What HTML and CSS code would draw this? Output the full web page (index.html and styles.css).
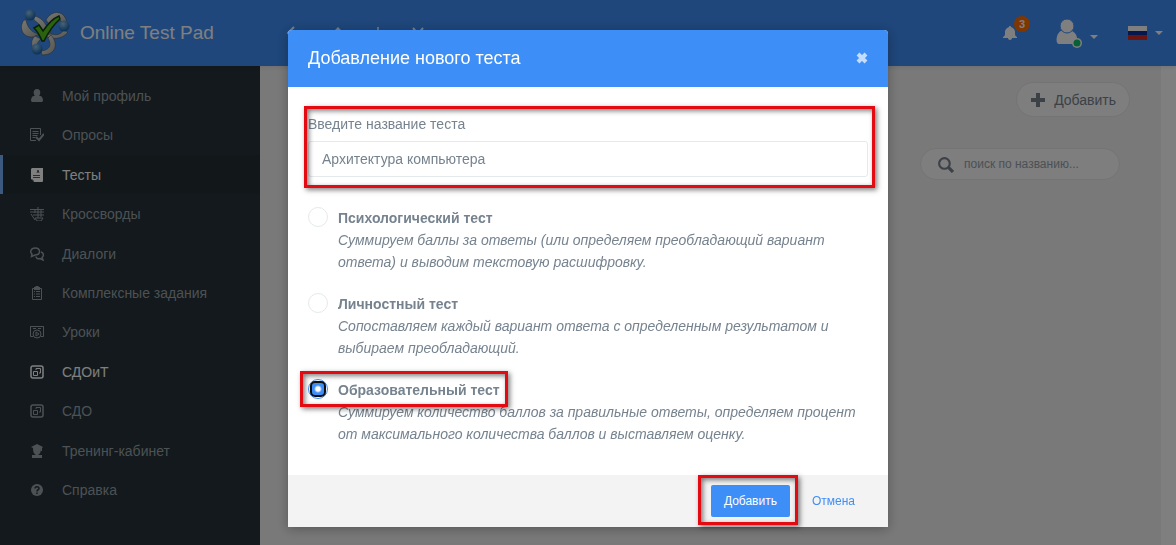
FILE: index.html
```html
<!DOCTYPE html>
<html lang="ru">
<head>
    <meta charset="UTF-8">
    <meta name="viewport" content="width=device-width, initial-scale=1.0">
    <title>Online Test Pad</title>
    <link rel="stylesheet" href="styles.css">
</head>
<body>
    <div class="page">
        <header class="navbar">
            <a class="brand" href="#">
                <svg class="logo" viewBox="0 0 50 48">
                    <defs>
                        <radialGradient id="ball" cx="40%" cy="30%" r="65%">
                            <stop offset="0" stop-color="#8cc8f0"/>
                            <stop offset="1" stop-color="#1f68b0"/>
                        </radialGradient>
                        <linearGradient id="ring" x1="0" y1="0" x2="1" y2="1">
                            <stop offset="0" stop-color="#f0f0ea"/>
                            <stop offset="1" stop-color="#a8a8a2"/>
                        </linearGradient>
                    </defs>
                    <g fill="url(#ring)" stroke="#4d5a68" stroke-width=".6">
                        <path d="M3 11C-3 19 2 29 12 28l6-3C11 24 6 18 5 11z"/>
                        <path d="M13 7c7 1 11 6 14 13l4 6-7-2c-4-6-6-10-11-13z"/>
                        <path d="M25 11C31 0 44 1 46 14l-4 1C38 7 32 8 28 15z"/>
                        <path d="M47 23c-6 8-16 8-25 3l8-1c6 2 10 0 13-4z"/>
                        <path d="M14 27c-4 4-4 8-2 13l4-2c0-3 1-6 4-8z"/>
                        <path d="M21 46c14 0 17-11 9-20l-3 3c4 7 2 12-7 13z"/>
                    </g>
                    <circle cx="9" cy="6" r="5.500" fill="url(#ball)"/>
                    <circle cx="43" cy="17" r="5.500" fill="url(#ball)"/>
                    <circle cx="16" cy="40" r="5.500" fill="url(#ball)"/>
                    <path d="M13 19l5-3 4 6C26 16 31 10 38 7l1 3c-8 7-12 14-16 22h-2c-2-5-4-9-8-13z" fill="#54c41a" stroke="#14400a" stroke-width="1.500"/>
                </svg>
                <span>Online Test Pad</span>
            </a>
            <nav class="crumbs">
                <svg viewBox="0 0 16 16"><path d="M10 1L4 7l6 6" fill="none" stroke="currentColor" stroke-width="2"/></svg>
                <svg viewBox="0 0 16 16"><path d="M8 1l7 7h-2v6H3V8H1z" fill="currentColor"/></svg>
                <svg viewBox="0 0 16 16"><path d="M8 1v14M3 8h10" fill="none" stroke="currentColor" stroke-width="1.500"/></svg>
                <svg viewBox="0 0 16 16"><path d="M3 2l10 12M13 2L3 14" fill="none" stroke="currentColor" stroke-width="2"/></svg>
            </nav>
            <div class="tools">
                <a class="bell" href="#" aria-label="Уведомления">
                    <svg viewBox="0 0 14 14"><path d="M7 0c1 0 1 .5 1 1 3 1 4 3 4 5 0 3 0 4 2 5v1H0v-1c2-1 2-2 2-5 0-2 1-4 4-5 0-.5 0-1 1-1zM5 12h4C9 14.500 5 14.500 5 12z" fill="#fff"/></svg>
                    <span class="badge">3</span>
                </a>
                <a class="user" href="#" aria-label="Профиль">
                    <svg class="avatar" viewBox="0 0 28 30">
                        <path d="M5 13h11c4 2 6 6 5 13H3c-4 0-3-11 2-13z" fill="#fff"/>
                        <circle cx="11" cy="8" r="7" fill="#fff" stroke="#3e8ef7"/>
                        <circle cx="21" cy="25" r="5" fill="#fff"/>
                        <circle cx="21" cy="25" r="3.500" fill="#11c26d"/>
                    </svg>
                    <span class="caret"></span>
                </a>
                <a class="lang" href="#" aria-label="Язык">
                    <span class="flag"></span>
                    <span class="caret"></span>
                </a>
            </div>
        </header>

        <div class="layout">
            <aside class="sidebar">
                <ul class="menu">
                    <li><a href="#">
                        <svg viewBox="0 0 14 14"><path d="M7 0c4 0 4 5 2 7h1c2 0 3 2 3 5l-1 1H2l-1-1c0-3 1-5 3-5h1C3 5 3 0 7 0z" fill="currentColor"/></svg>
                        Мой профиль</a></li>
                    <li><a href="#">
                        <svg viewBox="0 0 14 14" fill="none" stroke="currentColor"><path d="M10.500 7V.5H.5v12H6M2.500 3.500h6M2.500 5.500h6M2.500 7.500h5M2.500 9.500h3"/><path d="M6 9l3 3 5-6" stroke-width="2"/></svg>
                        Опросы</a></li>
                    <li class="active"><a href="#">
                        <svg viewBox="0 0 14 14"><path d="M2 0h11v13a1 1 0 01-1 1H4l-3-3V1z" fill="currentColor"/><path d="M7 5l1-3 1 3M3 7.500h7M3 9.500h7M1 12h2v2" fill="none" stroke="#263238" stroke-width=".8"/></svg>
                        Тесты</a></li>
                    <li><a href="#">
                        <svg viewBox="0 0 14 14" fill="none" stroke="currentColor"><path d="M0 2.500h14M0 5h14M3 8h11M8 0v11M5 2v4M11 2v8M1 7l4 6M5 11h8l-2 3H7z" /></svg>
                        Кроссворды</a></li>
                    <li><a href="#">
                        <svg viewBox="0 0 14 14" fill="none" stroke="currentColor" stroke-width="1.500"><path d="M5 1c6 0 6 7 0 7L1.500 9.500 2 7C-.5 5 1 1 5 1zM11 5c3 1 3 4 1 5.500l1 2.500-3-1.500c-2 .5-4 0-4-2"/></svg>
                        Диалоги</a></li>
                    <li><a href="#">
                        <svg viewBox="0 0 14 14" fill="none" stroke="currentColor"><path d="M4 2.500H2.500v11h9v-11H10M4 5.500h1M6 5.500h4M4 8h1M6 8h4M4 10.500h1M6 10.500h4"/><path d="M4 1h1l1-1h2l1 1h1v3H4z" fill="currentColor" stroke="none"/></svg>
                        Комплексные задания</a></li>
                    <li><a href="#">
                        <svg viewBox="0 0 14 14" fill="none" stroke="currentColor"><path d="M3 11.500H.5v-10h13v10H11M.5 1.500h13M3 3.500h3M8 3.500h3"/><circle cx="7" cy="9" r="4"/><path d="M6 7l3 2-3 2z"/></svg>
                        Уроки</a></li>
                    <li class="marked"><a href="#">
                        <svg viewBox="0 0 14 14" fill="none" stroke="currentColor"><rect x="1" y="1" width="12" height="12" rx="2" stroke-width="1.500"/><path d="M3.500 6.500h4v4h-4zM6 5V3.500h4.500V8H9"/></svg>
                        СДОиТ</a></li>
                    <li><a href="#">
                        <svg viewBox="0 0 14 14" fill="none" stroke="currentColor"><rect x="1" y="1" width="12" height="12" rx="2" stroke-width="1.500"/><path d="M3.500 6.500h4v4h-4zM6 5V3.500h4.500V8H9"/></svg>
                        СДО</a></li>
                    <li><a href="#">
                        <svg viewBox="0 0 14 14"><path d="M7 0l6 3-1 1v3h-1V4c0 4-1 6-3 7h4v3H2v-3h4C4 10 3 8 3 4L1 3z" fill="currentColor"/></svg>
                        Тренинг-кабинет</a></li>
                    <li><a href="#">
                        <svg viewBox="0 0 14 14"><circle cx="7" cy="7" r="6" fill="currentColor"/><path d="M5 5.500C5 3 9 3 9 5.500 9 7 7 6.500 7 8.500M7 9.500V11" fill="none" stroke="#263238" stroke-width="1.500"/></svg>
                        Справка</a></li>
                </ul>
            </aside>

            <main class="content">
                <button class="add" type="button">
                    <svg viewBox="0 0 16 16"><path d="M6 1h4v5h5v4h-5v5H6v-5H1V6h5z" fill="currentColor"/></svg>
                    Добавить
                </button>
                <label class="search">
                    <svg viewBox="0 0 16 16" fill="none" stroke="currentColor"><circle cx="7" cy="7" r="5" stroke-width="2"/><path d="M11 11l4 4" stroke-width="3"/></svg>
                    <input type="text" placeholder="поиск по названию..." aria-label="поиск по названию">
                </label>
            </main>
        </div>
    </div>

    <div class="backdrop">
        <form class="modal" role="dialog" aria-labelledby="modal-title">
            <div class="modal-header">
                <h4 id="modal-title">Добавление нового теста</h4>
                <button class="close" type="button" aria-label="Закрыть">
                    <svg viewBox="0 0 12 12"><path d="M2 2l8 8M10 2l-8 8" stroke="currentColor" stroke-width="4"/></svg>
                </button>
            </div>
            <div class="modal-body">
                <div class="form-group">
                    <label for="test-name">Введите название теста</label>
                    <input id="test-name" type="text" value="Архитектура компьютера">
                    <span class="frame frame-name"></span>
                </div>
                <div class="option">
                    <input type="radio" name="kind" id="kind-psy">
                    <div>
                        <label for="kind-psy">Психологический тест</label>
                        <p>Суммируем баллы за ответы (или определяем преобладающий вариант ответа) и выводим текстовую расшифровку.</p>
                    </div>
                </div>
                <div class="option">
                    <input type="radio" name="kind" id="kind-person">
                    <div>
                        <label for="kind-person">Личностный тест</label>
                        <p>Сопоставляем каждый вариант ответа с определенным результатом и выбираем преобладающий.</p>
                    </div>
                </div>
                <div class="option">
                    <input type="radio" name="kind" id="kind-edu" checked>
                    <div>
                        <label for="kind-edu">Образовательный тест<span class="frame frame-kind"></span></label>
                        <p>Суммируем количество баллов за правильные ответы, определяем процент от максимального количества баллов и выставляем оценку.</p>
                    </div>
                </div>
            </div>
            <div class="modal-footer">
                <div class="submit">
                    <button class="btn btn-primary" type="button">Добавить</button>
                    <span class="frame frame-submit"></span>
                </div>
                <button class="btn btn-link" type="button">Отмена</button>
            </div>
        </form>
    </div>
</body>
</html>
```
FILE: styles.css
```css
*, *::before { box-sizing: border-box; }
body { margin: 0; font-family: "Liberation Sans", Arial, sans-serif; font-size: 14px; line-height: 22px; color: #76838f; background: #fff; }
a { color: inherit; text-decoration: none; }
button, input { font-family: inherit; font-size: inherit; color: inherit; }
svg { display: block; flex: none; }

.page { display: flex; flex-direction: column; height: 100vh; min-height: 545px; }

/* top bar */
.navbar { display: flex; align-items: center; height: 66px; flex: none; background: #3e8ef7; color: #fff; box-shadow: 0 2px 4px rgba(0,0,0,0.08); position: relative; }
.brand { display: flex; align-items: center; gap: 9px; width: 284px; padding-left: 21px; font-size: 19px; }
.logo { width: 50px; height: 48px; }
.crumbs { display: flex; gap: 24px; padding-top: 2px; }
.crumbs svg { width: 16px; height: 16px; }
.crumbs svg:first-child { margin-right: 6px; }
.tools { display: flex; align-items: center; gap: 30px; margin-left: auto; padding-right: 13px; }
.bell { position: relative; width: 23px; }
.bell svg { width: 14px; height: 14px; }
.badge { position: absolute; top: -10px; left: 11px; width: 16px; height: 16px; border-radius: 8px; background: #ff6d00; font-size: 11px; font-weight: bold; line-height: 16px; text-align: center; }
.user, .lang { display: flex; align-items: center; gap: 6px; }
.user .caret { margin-top: 8px; }
.avatar { width: 28px; height: 30px; }
.caret { border: 4px solid transparent; border-top-color: #fff; border-bottom: 0; }
.lang { gap: 8px; }
.flag { width: 19px; height: 14px; background: linear-gradient(#fff 33%, #0b2f9f 33%, #0b2f9f 67%, #d52b1e 67%); }

.layout { display: flex; flex: 1; }

/* left menu */
.sidebar { display: flex; width: 260px; flex: none; background: #263238; }
.menu { display: grid; grid-auto-rows: 1fr; flex: 1; margin: 0; padding: 10px 0 35px; list-style: none; }
.menu a { display: flex; align-items: center; gap: 18px; height: 100%; padding-left: 27px; border-left: 3px solid transparent; color: #98a3a9; }
.menu svg { width: 14px; height: 14px; }
.menu .active a { border-left-color: #78b4ff; background: #242f35; color: #fff; }
.menu .marked a { color: #fff; }

/* work area */
.content { display: flex; flex-direction: column; align-items: flex-end; gap: 31px; flex: 1; margin-right: 15px; padding: 16px 31px; background: #f3f3f3; }
.add { display: flex; align-items: center; gap: 8px; height: 35px; padding: 0 13px; border: 1px solid #e8e8e8; border-radius: 18px; background: #fcfcfc; }
.add svg { width: 16px; height: 16px; }
.search { display: flex; align-items: center; gap: 10px; width: 200px; height: 32px; margin-right: 10px; padding: 0 16px; border: 1px solid #e8e8e8; border-radius: 16px; background: #fcfcfc; }
.search svg { width: 17px; height: 17px; }
.search input { width: 100%; min-width: 0; padding: 0; border: 0; outline: 0; background: none; font-size: 12px; }
.search input::placeholder { color: #98a3ab; }

/* dialog */
.backdrop { position: fixed; inset: 0; padding: 30px 10px; overflow: hidden; background: rgba(0,0,0,0.5); }
.modal { max-width: 600px; margin: 0 auto; border-radius: 4px 4px 0 0; background: #fff; box-shadow: 0 2px 12px rgba(0,0,0,0.3); }
.modal-header { display: flex; align-items: center; justify-content: space-between; padding: 15px 20px 16px; border-radius: 4px 4px 0 0; background: #3e8ef7; color: #fff; }
.modal-header h4 { margin: 0; font-size: 18px; font-weight: normal; line-height: 26px; }
.close { padding: 0; border: 0; background: none; opacity: 0.7; }
.close svg { width: 12px; height: 12px; }
.modal-body { display: flex; flex-direction: column; gap: 20px; padding: 26px 20px 30px; }
.form-group { position: relative; margin-bottom: 10px; }
.form-group label { display: block; margin-bottom: 6px; }
.form-group input { display: block; width: 100%; height: 36px; padding: 0 13px; border: 1px solid #e4eaec; border-radius: 3px; background: #fff; outline: 0; }
.option { display: flex; gap: 10px; }
.option label { position: relative; display: inline-block; font-weight: bold; }
.option p { margin: 0; font-style: italic; }
.option input { display: grid; place-items: center; flex: none; width: 20px; height: 20px; margin: 0; border: 1px solid #e4eaec; border-radius: 50%; appearance: none; background: #fff; }
.option input:checked { border-color: #3e8ef7; }
.option input:checked::before { content: ""; width: 16px; height: 16px; border: 2px solid #101010; border-radius: 5px; background: radial-gradient(circle, #fff 2px, #3e8ef7 4px); }

.modal-footer { display: flex; justify-content: flex-end; gap: 9px; padding: 10px 20px; background: #f3f3f3; }
.btn { height: 32px; padding: 0 13px; border: 0; border-radius: 2px; font-size: 12px; }
.btn-primary { background: #3e8ef7; color: #fff; }
.btn-link { background: none; color: #3e8ef7; }
.submit { position: relative; }

/* red frames drawn over the steps */
.frame { position: absolute; border: 3px solid #e30a12; box-shadow: 2px 2px 5px rgba(0,0,0,0.5), inset 2px 2px 5px rgba(0,0,0,0.5); pointer-events: none; }
.frame-name { inset: -7px -7px -11px -4px; }
.frame-kind { inset: -8px -8px -6px -38px; }
.frame-submit { inset: -10px -8px -8px -13px; }
```
